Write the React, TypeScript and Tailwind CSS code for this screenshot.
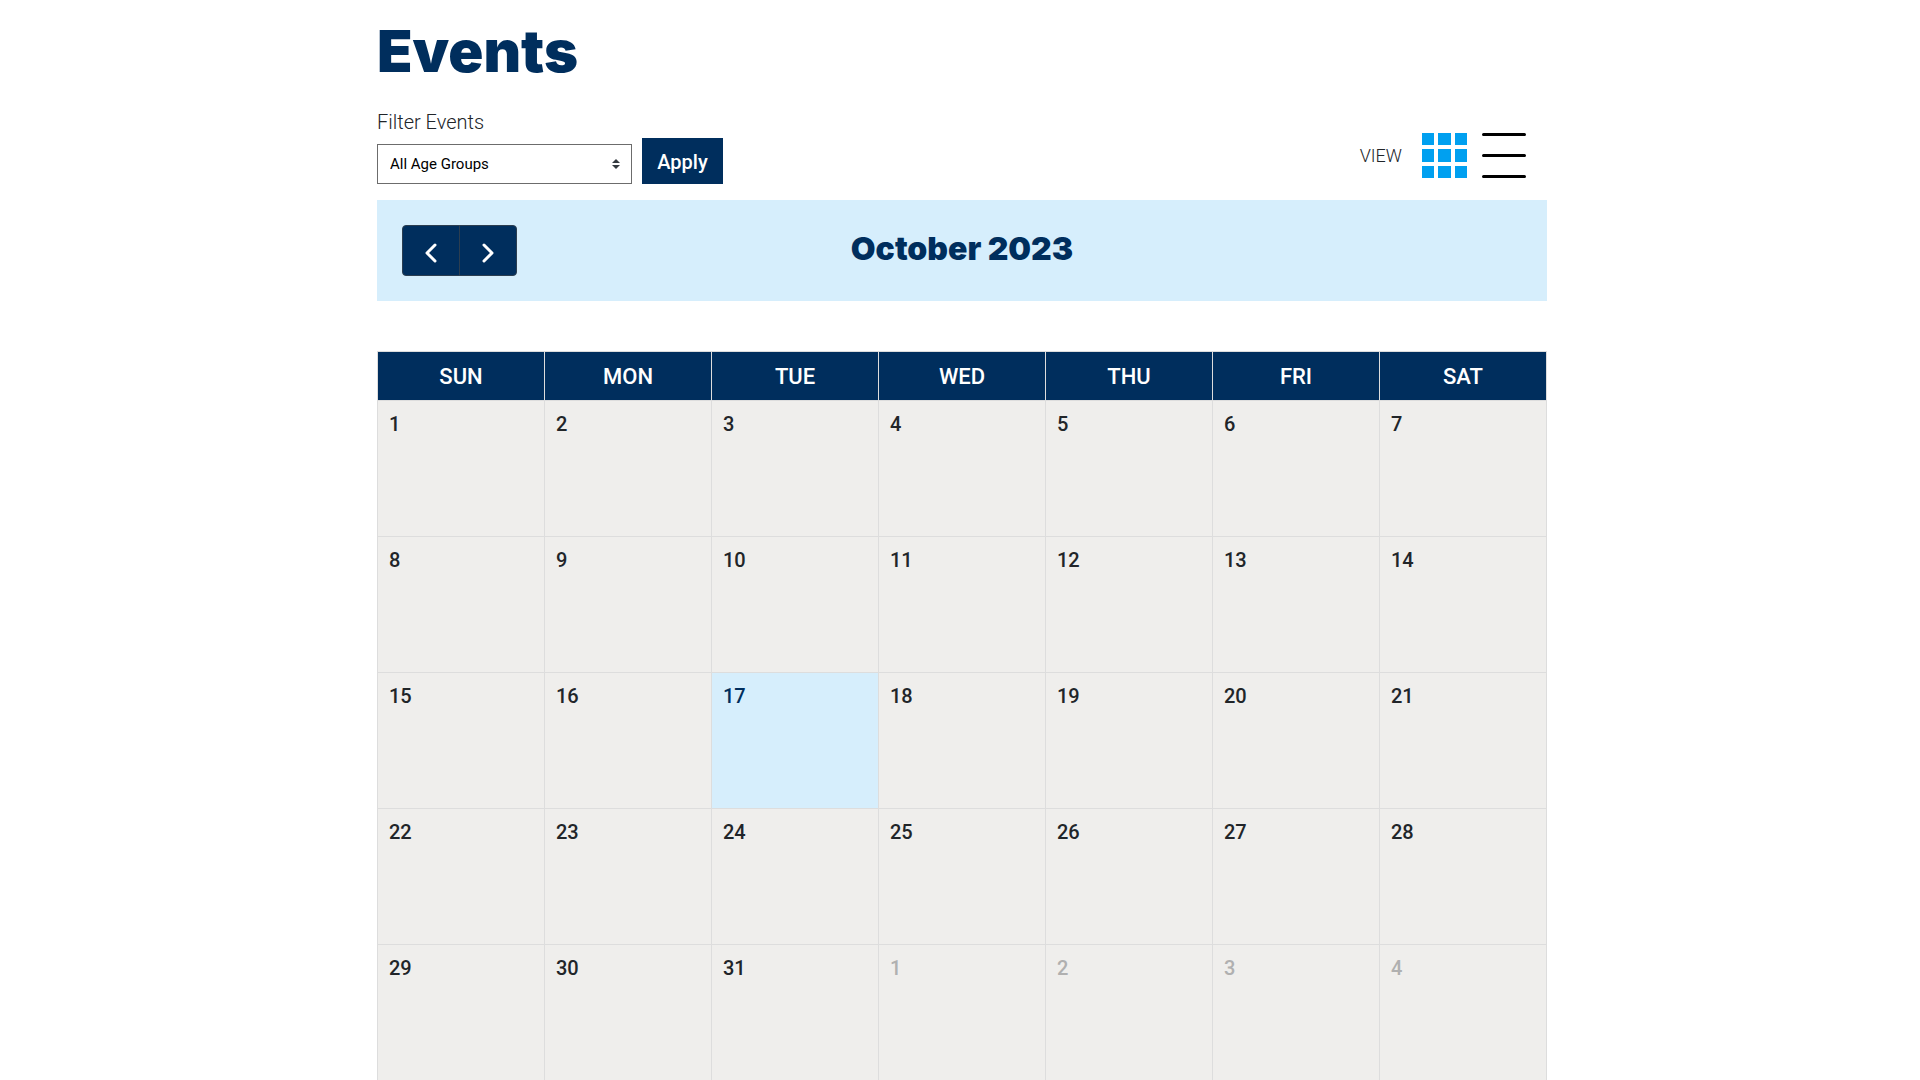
import { ChevronLeft, ChevronRight } from "lucide-react"

const weekdays = ["Sun", "Mon", "Tue", "Wed", "Thu", "Fri", "Sat"]

const weeks = [
  [1, 2, 3, 4, 5, 6, 7],
  [8, 9, 10, 11, 12, 13, 14],
  [15, 16, 17, 18, 19, 20, 21],
  [22, 23, 24, 25, 26, 27, 28],
  [29, 30, 31, 1, 2, 3, 4],
]

const today = 17

function dayClass(day: number, week: number) {
  if (week === 4 && day < 7) return "bg-[#efeeec] text-[#b0b0b0]"
  if (day === today) return "bg-[#d6eefc] text-[#002e5d]"
  return "bg-[#efeeec] text-[#212529]"
}

function GridIcon() {
  return (
    <svg width="45" height="45" viewBox="0 0 45 45" fill="#00a0f0" aria-hidden="true">
      {[0, 16, 33].map((y) =>
        [0, 16, 33].map((x) => <rect key={`${x}-${y}`} x={x} y={y} width={x === 16 ? 13 : 12} height={y === 16 ? 13 : 12} />)
      )}
    </svg>
  )
}

function ListIcon() {
  return (
    <svg width="44" height="45" viewBox="0 0 44 45" stroke="#000" strokeWidth="3" strokeLinecap="round" aria-hidden="true">
      <path d="M1.5 1.5h41M1.5 22.5h41M1.5 43.5h41" />
    </svg>
  )
}

function FilterBar() {
  return (
    <div className="flex items-end justify-between">
      <form onSubmit={(e) => e.preventDefault()}>
        <label htmlFor="age-group" className="block text-xl leading-6 font-light">
          Filter Events
        </label>
        <div className="mt-1 flex items-end gap-[10px]">
          <div className="relative">
            <select
              id="age-group"
              className="block h-10 w-[255px] appearance-none border border-[#6c6c6c] bg-white px-3 text-[15px] text-black"
            >
              <option>All Age Groups</option>
            </select>
            <svg className="pointer-events-none absolute top-[15px] right-3 fill-[#343a40]" width="8" height="10" viewBox="0 0 8 10" aria-hidden="true">
              <path d="M4 0 8 4H0zM4 10 0 6h8z" />
            </svg>
          </div>
          <button type="submit" className="h-[46px] w-[81px] bg-[#002e5d] pt-0.5 text-xl font-medium text-white">
            Apply
          </button>
        </div>
      </form>

      <div className="mr-[21px] mb-[6px] flex items-center">
        <span className="mr-5 text-lg font-light">VIEW</span>
        <button type="button" aria-label="Calendar view" className="mr-[15px]">
          <GridIcon />
        </button>
        <button type="button" aria-label="List view">
          <ListIcon />
        </button>
      </div>
    </div>
  )
}

export default function App() {
  return (
    <div className="bg-white pl-1 font-['Roboto',sans-serif] text-[#212529]">
      <main className="mx-auto max-w-[1170px]">
        <h1 className="pt-4 font-['Inter',sans-serif] text-[58px] leading-[70px] font-black text-[#002e5d]">Events</h1>

        <div className="mt-6">
          <FilterBar />
        </div>

        <div className="mt-4 grid grid-cols-3 items-center bg-[#d6eefc] px-[25px] py-[25px]">
          <div className="flex">
            <button
              type="button"
              aria-label="Previous month"
              className="flex h-[51px] w-[58px] items-center justify-center rounded-l border border-[#2c3e50] bg-[#002e5d] pt-1 text-white"
            >
              <ChevronLeft size={32} strokeWidth={2.25} />
            </button>
            <button
              type="button"
              aria-label="Next month"
              className="-ml-px flex h-[51px] w-[58px] items-center justify-center rounded-r border border-[#2c3e50] bg-[#002e5d] pt-1 text-white"
            >
              <ChevronRight size={32} strokeWidth={2.25} />
            </button>
          </div>
          <h2 className="pb-1 text-center font-['Inter',sans-serif] text-[32px] leading-10 font-black whitespace-nowrap text-[#002e5d]">
            October 2023
          </h2>
        </div>

        <table className="mt-[50px] w-full table-fixed border-collapse border border-[#dddddd]">
          <thead>
            <tr>
              {weekdays.map((name) => (
                <th key={name} className="h-[49px] border border-[#dddddd] bg-[#002e5d] text-[22px] font-medium text-white uppercase">
                  {name}
                </th>
              ))}
            </tr>
          </thead>
          <tbody>
            {weeks.map((days, week) => (
              <tr key={week}>
                {days.map((day) => (
                  <td
                    key={day}
                    className={`h-[136px] border border-[#dddddd] px-[11px] pt-[7px] align-top text-xl leading-8 font-medium ${dayClass(day, week)}`}
                  >
                    {day}
                  </td>
                ))}
              </tr>
            ))}
          </tbody>
        </table>
      </main>
    </div>
  )
}
